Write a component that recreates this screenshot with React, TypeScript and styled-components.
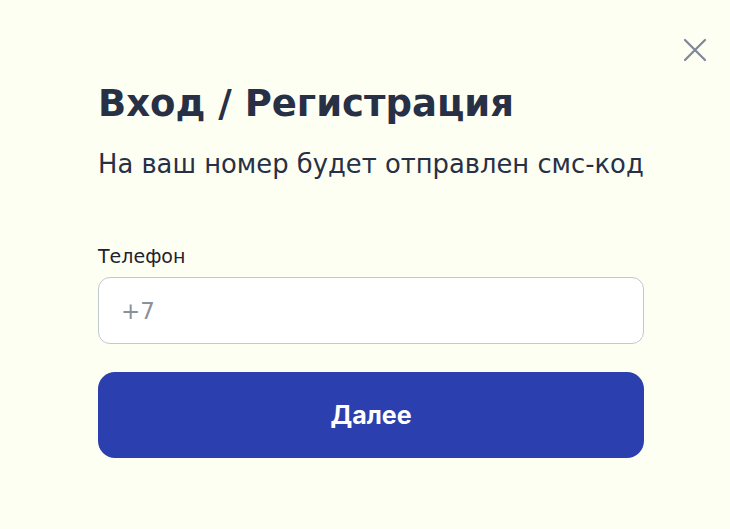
import React from 'react';
import styled, { createGlobalStyle } from 'styled-components';

const GlobalStyle = createGlobalStyle`
  html, body {
    margin: 0;
    padding: 0;
    background: #fefff3;
  }
  body {
    font-family: "DejaVu Sans", "Noto Sans", sans-serif;
  }
`;

const Modal = styled.div`
  position: relative;
  box-sizing: border-box;
  width: 730px;
  height: 529px;
  background: #fefff3;
  padding: 81px 86px 0 98px;
  display: flex;
  flex-direction: column;
`;

const CloseButton = styled.button`
  position: absolute;
  top: 36px;
  right: 21px;
  width: 28px;
  height: 28px;
  padding: 0;
  border: none;
  background: transparent;
  color: #7d8796;
  display: flex;
  align-items: center;
  justify-content: center;
  cursor: pointer;
`;

const Title = styled.h1`
  margin: 0;
  font-family: "DejaVu Sans", "Noto Sans", sans-serif;
  font-size: 37px;
  font-weight: 700;
  line-height: 46px;
  white-space: nowrap;
  color: #283046;
`;

const Subtitle = styled.p`
  margin: 22px 0 0;
  font-size: 25.8px;
  line-height: 30px;
  white-space: nowrap;
  color: #283046;
`;

const Field = styled.label`
  display: flex;
  flex-direction: column;
  margin-top: 66px;
`;

const FieldLabel = styled.span`
  font-size: 19px;
  line-height: 22px;
  color: #1e2230;
  margin-bottom: 10px;
`;

const Input = styled.input`
  box-sizing: border-box;
  width: 100%;
  height: 67px;
  border: 1px solid #c3c7cf;
  border-radius: 12px;
  background: #ffffff;
  padding: 0 22px;
  font-family: "DejaVu Sans", "Noto Sans", sans-serif;
  font-size: 23px;
  color: #283046;
  outline: none;
  &::placeholder {
    color: #8a919c;
  }
`;

const SubmitButton = styled.button`
  margin-top: 28px;
  width: 100%;
  height: 86px;
  border: none;
  border-radius: 17px;
  background: #2c3fae;
  color: #ffffff;
  font-family: Inter, "Noto Sans", sans-serif;
  font-size: 25px;
  font-weight: 700;
  cursor: pointer;
`;

const App: React.FC = () => {
  return (
    <>
      <GlobalStyle />
      <Modal>
        <CloseButton aria-label="Закрыть">
          <svg width="24" height="24" viewBox="0 0 24 24" fill="none" stroke="currentColor" strokeWidth="2.2" strokeLinecap="round">
            <path d="M2 2L22 22M22 2L2 22" />
          </svg>
        </CloseButton>
        <Title>Вход / Регистрация</Title>
        <Subtitle>На ваш номер будет отправлен смс-код</Subtitle>
        <Field>
          <FieldLabel>Телефон</FieldLabel>
          <Input placeholder="+7" />
        </Field>
        <SubmitButton>Далее</SubmitButton>
      </Modal>
    </>
  );
};

export default App;
